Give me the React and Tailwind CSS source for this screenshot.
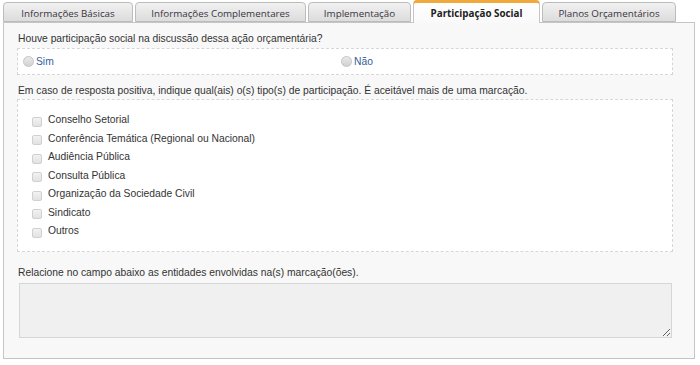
import React from "react";

const tabs = [
  { label: "Informações Básicas", w: "w-[130px]" },
  { label: "Informações Complementares", w: "w-[171px]" },
  { label: "Implementação", w: "w-[103px]" },
  { label: "Participação Social", w: "w-[127px]", active: true },
  { label: "Planos Orçamentários", w: "w-[134px]" },
];

const items = [
  "Conselho Setorial",
  "Conferência Temática (Regional ou Nacional)",
  "Audiência Pública",
  "Consulta Pública",
  "Organização da Sociedade Civil",
  "Sindicato",
  "Outros",
];

function Radio({ label }) {
  return (
    <div className="flex items-center gap-[2px]">
      <span className="w-[11px] h-[11px] rounded-full border border-[#c4c4c4] bg-gradient-to-b from-[#e9e9e9] to-[#d2d2d2]" />
      <span className="text-[#35609a]">{label}</span>
    </div>
  );
}

export default function App() {
  return (
    <div className="w-[700px] h-[365px] bg-white text-[10.3px] leading-[14px] text-[#333] font-['Liberation_Sans',Arial,sans-serif]">
      <div className="pl-[3px] pr-[5px] pt-[1px]">
        <div className="flex items-end gap-[2px] h-[22px] relative z-10 -mb-px">
          {tabs.map((t) =>
            t.active ? (
              <div
                key={t.label}
                className={`${t.w} h-[23px] rounded-t-[4px] border border-[#c5c5c5] border-b-0 border-t-[3px] border-t-[#f2a93b] bg-gradient-to-b from-white to-[#f9f9f9] flex items-center justify-center font-bold text-[#222] font-['Open_Sans',sans-serif] text-[9.8px] pt-[2px] shrink-0`}
              >
                {t.label}
              </div>
            ) : (
              <div
                key={t.label}
                className={`${t.w} h-[20px] mb-px rounded-t-[4px] border border-[#bcbcbc] bg-gradient-to-b from-[#f1f1f1] to-[#dcdcdc] flex items-center justify-center text-[#3a3340] font-['Open_Sans',sans-serif] text-[9.8px] pt-[3px] shrink-0`}
              >
                {t.label}
              </div>
            )
          )}
        </div>
        <div className="h-[337px] border border-[#c5c5c5] bg-[#f8f8f8] pl-[13px] pr-[21px]">
          <div className="mt-[9px] pl-[1px]">Houve participação social na discussão dessa ação orçamentária?</div>
          <div className="mt-[2px] h-[27px] border border-dashed border-[#d6d6d6] bg-white flex items-center pl-[5px]">
            <div className="w-[318px]">
              <Radio label="Sim" />
            </div>
            <Radio label="Não" />
          </div>
          <div className="mt-[9px] pl-[1px]">
            Em caso de resposta positiva, indique qual(ais) o(s) tipo(s) de participação. É aceitável mais de uma marcação.
          </div>
          <div className="mt-[1px] h-[153px] border border-dashed border-[#d6d6d6] bg-white pt-[11px] pl-[14px]">
            {items.map((it) => (
              <div key={it} className="h-[18.5px] flex items-center gap-[6px]">
                <span className="w-[10px] h-[10px] mt-[3px] rounded-[2px] border border-[#d0d0d0] bg-gradient-to-b from-[#f2f2f2] to-[#e2e2e2]" />
                <span>{it}</span>
              </div>
            ))}
          </div>
          <div className="mt-[14px] pl-[1px]">Relacione no campo abaixo as entidades envolvidas na(s) marcação(ões).</div>
          <textarea
            readOnly
            className="mt-[3px] ml-[2px] block w-[653px] h-[55px] border border-[#d6d6d6] bg-[#f0f0f0] outline-none"
          />
        </div>
      </div>
    </div>
  );
}
